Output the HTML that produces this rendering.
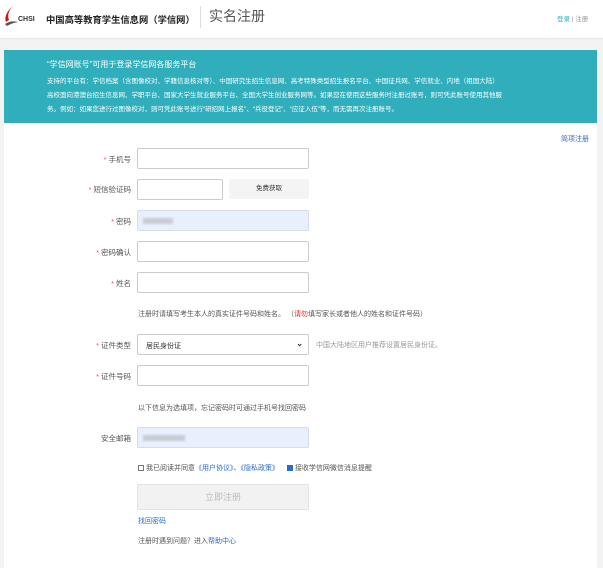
<!DOCTYPE html>
<html><head><meta charset="utf-8"><style>
*{margin:0;padding:0;box-sizing:border-box}
body{width:603px;height:568px;background:#f3f3f3;font-family:"Liberation Sans","Noto Sans CJK SC",sans-serif;position:relative;overflow:hidden;color:#333}
.a{position:absolute}
.hdr{left:0;top:0;width:603px;height:39px;background:#fff;border-bottom:1px solid #e6e6e6}
.ban{left:4px;top:50px;width:593px;height:73px;background:#30aebc;color:#fff}
.card{left:4px;top:123px;width:593px;height:445px;background:#fff}
.lb{font-size:7.5px;color:#555;text-align:right;width:60px;left:71px}
.lb b{color:#e55;font-weight:normal;margin-right:2px}
.in{left:137px;width:172px;height:21px;border:1px solid #ccc;border-radius:2px;background:#fff}
.fill{background:#e8f0fe;border-color:#d6dcea}
.blur{position:absolute;left:5px;top:7px;height:6px;background:#c8ccd4;filter:blur(1px)}
.t{font-size:7px;color:#555}
.lk{color:#2a6bd0}
</style></head><body>
<div class="a hdr">
 <svg class="a" style="left:3px;top:5px" width="16" height="22" viewBox="0 0 16 22"><path d="M10 1C6 5 4 10 6 15L3 17C1 12 4 6 10 1Z" fill="#c8161d"/><path d="M2 19Q8 15 15 17Q9 18 4 21Z" fill="#555"/></svg>
 <div class="a" style="left:18px;top:16px;font-size:7px;font-weight:bold;color:#333">CHSI</div>
 <div class="a" style="left:46px;top:12px;font-size:9.3px;color:#222;font-weight:bold;white-space:nowrap">中国高等教育学生信息网（学信网）</div>
 <div class="a" style="left:200px;top:6px;width:1px;height:22px;background:#ddd"></div>
 <div class="a" style="left:209px;top:6px;font-size:14px;color:#555">实名注册</div>
 <div class="a" style="left:557px;top:13px;font-size:6.5px;color:#999"><span style="color:#30aebc">登录</span> | 注册</div>
</div>
<div class="a ban">
 <div class="a" style="left:43px;top:9px;font-size:8px">“学信网账号”可用于登录学信网各服务平台</div>
 <div class="a" style="left:43px;top:25px;white-space:nowrap;font-size:6.5px;line-height:14px">支持的平台有：学信档案（含图像校对、学籍信息核对等）、中国研究生招生信息网、高考特殊类型招生报名平台、中国征兵网、学信就业、内地（祖国大陆）<br>高校面向港澳台招生信息网、学职平台、国家大学生就业服务平台、全国大学生创业服务网等。如果您在使用这些服务时注册过账号，则可凭此账号使用其他服<br>务。例如：如果您进行过图像校对，则可凭此账号进行“研招网上报名”、“兵役登记”、“应征入伍”等，而无需再次注册账号。</div>
</div>
<div class="a card"></div>
<div class="a t lk" style="left:561px;top:134px">简项注册</div>
<div class="a lb" style="top:154px"><b>*</b>手机号</div><div class="a in" style="top:148px"></div>
<div class="a lb" style="top:184px"><b>*</b>短信验证码</div><div class="a in" style="top:179px;width:86px;height:21px"></div>
<div class="a" style="left:229px;top:179px;width:80px;height:20px;background:#f4f4f4;border-radius:2px;font-size:6.5px;color:#333;text-align:center;line-height:20px">免费获取</div>
<div class="a lb" style="top:216px"><b>*</b>密码</div><div class="a in fill" style="top:210px"><div class="blur" style="width:30px"></div></div>
<div class="a lb" style="top:247px"><b>*</b>密码确认</div><div class="a in" style="top:241px"></div>
<div class="a lb" style="top:278px"><b>*</b>姓名</div><div class="a in" style="top:272px"></div>
<div class="a t" style="left:138px;top:309px">注册时请填写考生本人的真实证件号码和姓名。 （<span style="color:#e22">请勿</span>填写家长或者他人的姓名和证件号码）</div>
<div class="a lb" style="top:340px"><b>*</b>证件类型</div>
<div class="a in" style="top:334px;font-size:7px;color:#333;padding:6px 0 0 8px">居民身份证<span style="position:absolute;right:5px;top:4px;font-size:8px;font-weight:bold">⌄</span></div>
<div class="a t" style="left:316px;top:340px;color:#999">中国大陆地区用户推荐设置居民身份证。</div>
<div class="a lb" style="top:371px"><b>*</b>证件号码</div><div class="a in" style="top:365px"></div>
<div class="a t" style="left:138px;top:403px">以下信息为选填项，忘记密码时可通过手机号找回密码</div>
<div class="a lb" style="top:433px">安全邮箱</div><div class="a in fill" style="top:427px"><div class="blur" style="width:42px"></div></div>
<div class="a t" style="left:138px;top:463px"><span style="display:inline-block;width:6px;height:6px;border:1px solid #777;vertical-align:-1px"></span> 我已阅读并同意<span class="lk">《用户协议》</span>、<span class="lk">《隐私政策》</span> <span style="display:inline-block;width:6px;height:6px;background:#2a6bd0;vertical-align:-1px;margin-left:6px"></span> 接收学信网微信消息提醒</div>
<div class="a" style="left:137px;top:484px;width:172px;height:26px;background:#f2f2f2;border:1px solid #e3e3e3;border-radius:2px;text-align:center;line-height:25px;font-size:9px;color:#bbb">立即注册</div>
<div class="a t lk" style="left:138px;top:516px">找回密码</div>
<div class="a t" style="left:138px;top:536px">注册时遇到问题？进入<span class="lk">帮助中心</span></div>
</body></html>
